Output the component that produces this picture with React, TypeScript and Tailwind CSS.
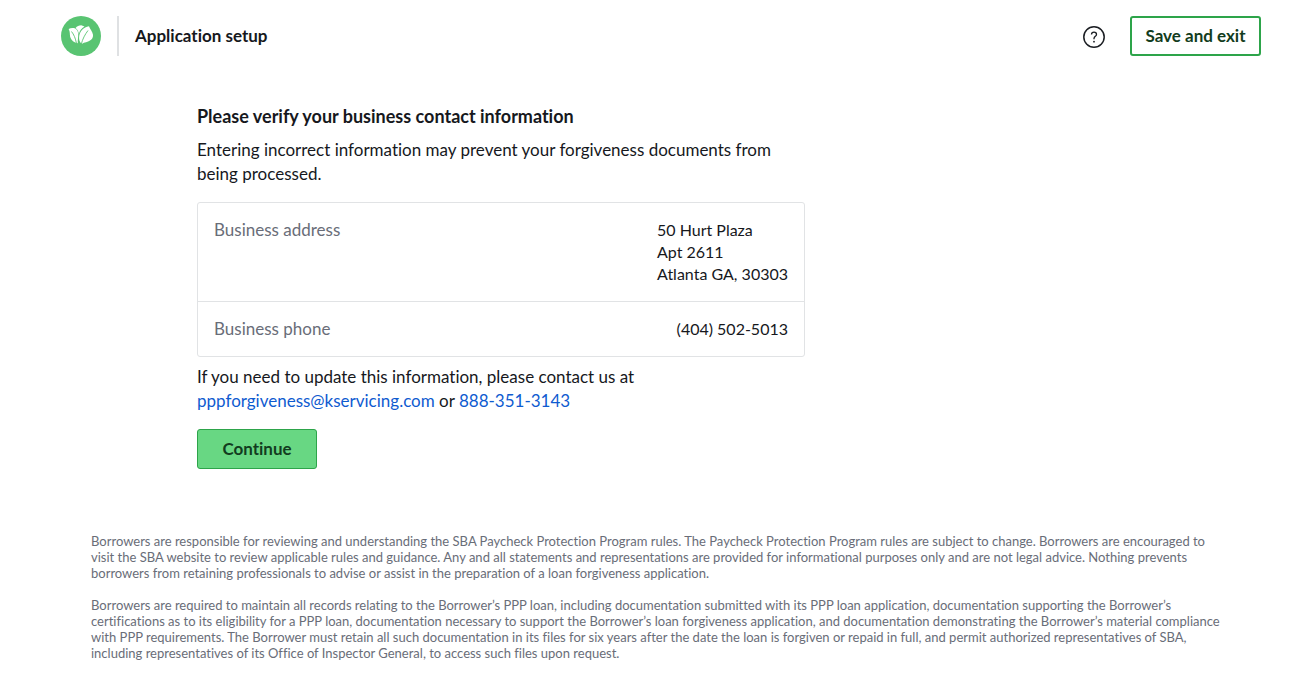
import React from "react";
import classNames from "clsx";

const address = ["50 Hurt Plaza", "Apt 2611", "Atlanta GA, 30303"];

const LeafLogo: React.FC = () => (
  <svg viewBox="0 0 40 40" className="size-10" role="img" aria-label="Home">
    <circle cx="20" cy="20" r="20" fill="#59c472" />
    <g fill="#fff">
      <path d="M7.600 13c1.500-.8 3.400-1.300 5.400-.9 2.600.6 4 3 4.200 5.900.2 2.900-.6 5.800-.4 9.300-3.600-.6-6.700-2.800-7.600-6.200-.6-2.700.1-5.300-1.600-8.100z" />
      <path d="M14.600 12c1.400-1.700 3.300-2.600 5.600-2.700l3.300 1.200c-3 1.800-5 4.400-5.600 7.700-.5-2.700-1.300-4.800-3.300-6.200z" />
      <path d="M28 10.200c.8 2.600 3.600 5.100 4 8.600.3 2.600-1 4.500-3 5.800-2.500 1.700-5.200 1.600-8.400 3.300-1.700-1.700-2.800-4-2.500-7 .5-5.700 4.500-9.600 9.900-10.700z" />
    </g>
    <path
      d="M10.500 15.500c2.400 3 4 6.800 5 12M27 14.500c-3 4-5.400 8.300-6.800 14"
      fill="none"
      stroke="#59c472"
      strokeWidth="0.9"
    />
  </svg>
);

const HelpIcon: React.FC = () => (
  <svg viewBox="0 0 24 24" className="size-6" fill="none" stroke="#1b1e23">
    <circle cx="12" cy="12" r="10.200" strokeWidth="1.500" />
    <path
      d="M9.500 9.500c0-1.500 1-2.300 2.500-2.300s2.500.9 2.500 2.200c0 1.900-2.500 2-2.500 4.200v.6"
      strokeWidth="1.300"
    />
    <circle cx="12" cy="16.700" r=".9" fill="#1b1e23" stroke="none" />
  </svg>
);

const Header: React.FC = () => (
  <header className="flex items-center justify-between pt-4">
    <div className="flex items-center">
      <LeafLogo />
      <div className="ml-4 flex h-10 items-center border-l-2 border-[#dfe1e3] pl-4">
        <h1 className="text-[17px] leading-6 font-bold">Application setup</h1>
      </div>
    </div>
    <div className="flex items-center gap-6">
      <button type="button" aria-label="Help" className="pt-0.5">
        <HelpIcon />
      </button>
      <button
        type="button"
        className="h-10 min-w-[131px] rounded-[3px] border-2 border-[#2da44a] text-[17px] leading-6 font-bold text-[#123c20]"
      >
        Save and exit
      </button>
    </div>
  </header>
);

type RowProps = {
  label: string;
  isLast?: boolean;
  children: React.ReactNode;
};

const InfoRow: React.FC<RowProps> = ({ label, isLast, children }) => (
  <div
    className={classNames("flex justify-between p-4 leading-[22px]", {
      "border-b border-[#e1e3e5]": !isLast,
    })}
  >
    <dt className="text-[#696d78]">{label}</dt>
    <dd className="text-[16px] leading-[22px]">{children}</dd>
  </div>
);

export default function App() {
  return (
    <div className="pl-[21px] font-['Lato',sans-serif] text-[#16181d] [font-variant-ligatures:no-common-ligatures]">
      <div className="mx-auto max-w-[1200px]">
        <Header />
        <main className="mt-12 ml-[136px] max-w-[608px] text-[17px] leading-6">
          <h2 className="text-[18px] font-bold">
            Please verify your business contact information
          </h2>
          <p className="mt-2.5">
            Entering incorrect information may prevent your forgiveness
            documents from
            <br />
            being processed.
          </p>
          <dl className="mt-4 rounded-[3px] border border-[#e1e3e5]">
            <InfoRow label="Business address">
              {address.map((line) => (
                <div key={line}>{line}</div>
              ))}
            </InfoRow>
            <InfoRow label="Business phone" isLast>
              (404) 502-5013
            </InfoRow>
          </dl>
          <p className="mt-2">
            If you need to update this information, please contact us at
            <br />
            <a
              href="mailto:pppforgiveness@kservicing.com"
              className="text-[#0f5bd0]"
            >
              pppforgiveness@kservicing.com
            </a>{" "}
            or{" "}
            <a href="tel:888-351-3143" className="text-[#0f5bd0]">
              888-351-3143
            </a>
          </p>
          <button
            type="button"
            className="mt-4 block h-10 w-[120px] rounded-[3px] border border-[#2da44a] bg-[#68d783] font-bold text-[#123c20]"
          >
            Continue
          </button>
        </main>
        <footer className="mt-16 px-[30px] pb-4 text-[13px] leading-4 text-[#696d78]">
          <p>
            Borrowers are responsible for reviewing and understanding the SBA
            Paycheck Protection Program rules. The Paycheck Protection Program
            rules are subject to change. Borrowers are encouraged to
            <br />
            visit the SBA website to review applicable rules and guidance. Any
            and all statements and representations are provided for
            informational purposes only and are not legal advice. Nothing
            prevents
            <br />
            borrowers from retaining professionals to advise or assist in the
            preparation of a loan forgiveness application.
          </p>
          <p className="mt-4">
            Borrowers are required to maintain all records relating to the
            Borrower’s PPP loan, including documentation submitted with its PPP
            loan application, documentation supporting the Borrower’s
            <br />
            certifications as to its eligibility for a PPP loan, documentation
            necessary to support the Borrower’s loan forgiveness application,
            and documentation demonstrating the Borrower’s material compliance
            <br />
            with PPP requirements. The Borrower must retain all such
            documentation in its files for six years after the date the loan is
            forgiven or repaid in full, and permit authorized representatives of
            SBA,
            <br />
            including representatives of its Office of Inspector General, to
            access such files upon request.
          </p>
        </footer>
      </div>
    </div>
  );
}
